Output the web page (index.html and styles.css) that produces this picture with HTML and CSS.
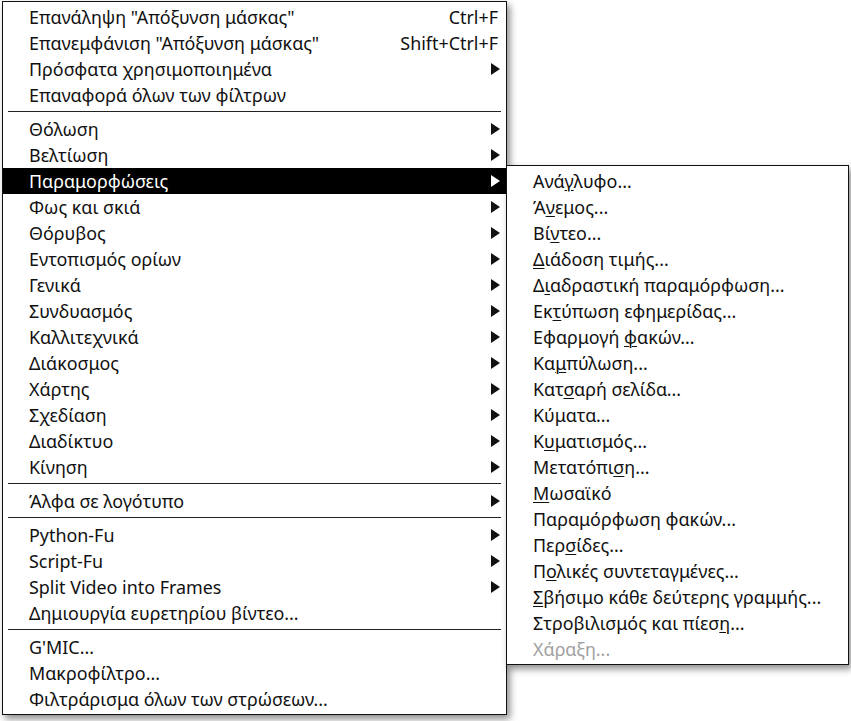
FILE: index.html
```html
<!DOCTYPE html>
<html lang="el">
<head>
<meta charset="utf-8">
<title>Φίλτρα</title>
<link rel="stylesheet" href="styles.css">
</head>
<body>
<div class="screen">
  <div class="menu main">
    <div class="item"><span class="label">Επανάληψη "Απόξυνση μάσκας"</span><span class="accel">Ctrl+F</span></div>
    <div class="item"><span class="label">Επανεμφάνιση "Απόξυνση μάσκας"</span><span class="accel">Shift+Ctrl+F</span></div>
    <div class="item sub"><span class="label">Πρόσφατα χρησιμοποιημένα</span><span class="arrow"></span></div>
    <div class="item"><span class="label">Επαναφορά όλων των φίλτρων</span></div>
    <div class="sep"></div>
    <div class="item sub"><span class="label">Θόλωση</span><span class="arrow"></span></div>
    <div class="item sub"><span class="label">Βελτίωση</span><span class="arrow"></span></div>
    <div class="item sub active"><span class="label">Παραμορφώσεις</span><span class="arrow"></span></div>
    <div class="item sub"><span class="label">Φως και σκιά</span><span class="arrow"></span></div>
    <div class="item sub"><span class="label">Θόρυβος</span><span class="arrow"></span></div>
    <div class="item sub"><span class="label">Εντοπισμός ορίων</span><span class="arrow"></span></div>
    <div class="item sub"><span class="label">Γενικά</span><span class="arrow"></span></div>
    <div class="item sub"><span class="label">Συνδυασμός</span><span class="arrow"></span></div>
    <div class="item sub"><span class="label">Καλλιτεχνικά</span><span class="arrow"></span></div>
    <div class="item sub"><span class="label">Διάκοσμος</span><span class="arrow"></span></div>
    <div class="item sub"><span class="label">Χάρτης</span><span class="arrow"></span></div>
    <div class="item sub"><span class="label">Σχεδίαση</span><span class="arrow"></span></div>
    <div class="item sub"><span class="label">Διαδίκτυο</span><span class="arrow"></span></div>
    <div class="item sub"><span class="label">Κίνηση</span><span class="arrow"></span></div>
    <div class="sep"></div>
    <div class="item sub"><span class="label">Άλφα σε λογότυπο</span><span class="arrow"></span></div>
    <div class="sep"></div>
    <div class="item sub"><span class="label">Python-Fu</span><span class="arrow"></span></div>
    <div class="item sub"><span class="label">Script-Fu</span><span class="arrow"></span></div>
    <div class="item sub"><span class="label">Split Video into Frames</span><span class="arrow"></span></div>
    <div class="item"><span class="label">Δημιουργία ευρετηρίου βίντεο...</span></div>
    <div class="sep"></div>
    <div class="item"><span class="label">G'MIC...</span></div>
    <div class="item"><span class="label">Μακροφίλτρο...</span></div>
    <div class="item"><span class="label">Φιλτράρισμα όλων των στρώσεων...</span></div>
  </div>

  <div class="menu submenu">
    <div class="item"><span class="label">Ανά<u>γ</u>λυφο...</span></div>
    <div class="item"><span class="label">Ά<u>ν</u>εμος...</span></div>
    <div class="item"><span class="label">Βί<u>ν</u>τεο...</span></div>
    <div class="item"><span class="label"><u>Δ</u>ιάδοση τιμής...</span></div>
    <div class="item"><span class="label">Δ<u>ι</u>αδραστική παραμόρφωση...</span></div>
    <div class="item"><span class="label">Εκ<u>τ</u>ύπωση εφημερίδας...</span></div>
    <div class="item"><span class="label">Εφαρμογή <u>φ</u>ακών...</span></div>
    <div class="item"><span class="label">Κα<u>μ</u>πύλωση...</span></div>
    <div class="item"><span class="label">Κατ<u>σ</u>αρή σελίδα...</span></div>
    <div class="item"><span class="label">Κύματα...</span></div>
    <div class="item"><span class="label">Κ<u>υ</u>ματισμός...</span></div>
    <div class="item"><span class="label">Μετατόπι<u>σ</u>η...</span></div>
    <div class="item"><span class="label"><u>Μ</u>ωσαϊκό</span></div>
    <div class="item"><span class="label">Παραμόρφωση φακών...</span></div>
    <div class="item"><span class="label">Περ<u>σ</u>ίδες...</span></div>
    <div class="item"><span class="label">Π<u>ο</u>λικές συντεταγμένες...</span></div>
    <div class="item"><span class="label"><u>Σ</u>βήσιμο κάθε δεύτερης γραμμής...</span></div>
    <div class="item"><span class="label">Στροβιλισμός και πίεσ<u>η</u>...</span></div>
    <div class="item disabled"><span class="label">Χάραξη...</span></div>
  </div>
</div>
</body>
</html>
```

FILE: styles.css
```css
html, body {
  margin: 0;
  padding: 0;
  background: #ffffff;
}

.screen {
  position: relative;
  width: 851px;
  height: 721px;
  overflow: hidden;
  font-family: "Noto Sans", "DejaVu Sans", sans-serif;
  font-size: 17.9px;
  color: #111111;
}

.menu {
  background: #ffffff;
  border: 1px solid #111111;
  padding: 2px 0;
  box-shadow: 3px 4px 7px rgba(0, 0, 0, 0.45);
  box-sizing: border-box;
}

.main {
  margin: 1px 0 0 2px;
  width: 505px;
}

.submenu {
  position: absolute;
  left: 506px;
  top: 165px;
  width: 343px;
}

.item {
  display: flex;
  align-items: center;
  height: 26px;
  padding: 0 6px 0 26px;
  white-space: nowrap;
}

.label {
  flex: 1 1 auto;
  line-height: 26px;
}

.label u {
  text-decoration-thickness: 1px;
  text-underline-offset: 2px;
}

.accel {
  line-height: 26px;
  margin-right: 2px;
}

.arrow {
  width: 0;
  height: 0;
  border-left: 9px solid #111111;
  border-top: 6px solid transparent;
  border-bottom: 6px solid transparent;
}

.item.active {
  background: #000000;
  color: #ffffff;
}

.item.active .arrow {
  border-left-color: #ffffff;
}

.item.disabled {
  color: #a0a0a0;
}

.sep {
  height: 8px;
  margin: 0 5px;
  padding-top: 3px;
  box-sizing: border-box;
}

.sep::before {
  content: "";
  display: block;
  height: 1px;
  background: #222222;
}
```
